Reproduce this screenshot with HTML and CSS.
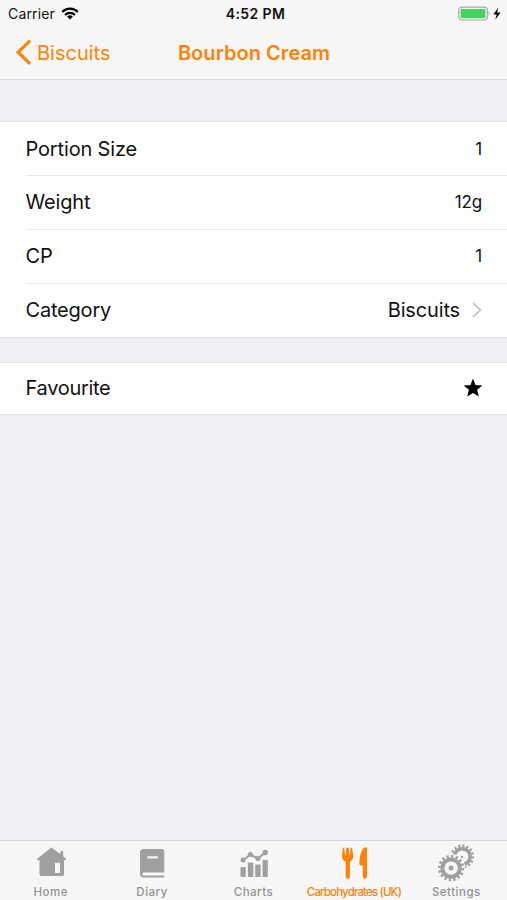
FILE: index.html
```html
<!DOCTYPE html>
<html lang="en">
<head>
<meta charset="utf-8">
<title>Bourbon Cream</title>
<link rel="stylesheet" href="styles.css">
</head>
<body>
<div class="screen">
  <header class="top">
    <div class="status">
      <div class="status-left"><span class="carrier">Carrier</span>
        <svg class="wifi" width="18" height="13" viewBox="0 0 18 13"><g fill="none" stroke="#000" stroke-width="2.1"><path d="M1.2 4.9a11 11 0 0 1 15.6 0"/><path d="M4 7.9a7.1 7.1 0 0 1 10 0"/></g><path d="M6.1 9.7a4.1 4.1 0 0 1 5.8 0L9 12.6z"/></svg>
      </div>
      <span class="time">4:52 PM</span>
      <div class="status-right">
        <svg width="44" height="16" viewBox="0 0 44 16"><rect x=".8" y="1.2" width="28.5" height="12.8" rx="3.2" fill="#f7f7f8" stroke="#a6a6a9" stroke-width="1.2"/><rect x="2.6" y="3" width="24.8" height="9.2" rx="1.2" fill="#45d45f"/><path d="M30.6 5.3q2.1 2.3 0 4.6z" fill="#a6a6a9"/><path d="M40.3 1.6L35.4 8.4h3.3l-1.5 5.4 5.5-7.4h-3.6z"/></svg>
      </div>
    </div>
    <nav class="nav">
      <div class="back"><svg width="17" height="27" viewBox="0 0 17 27"><path d="M15 1.6L3.2 13.2 15 24.8" fill="none" stroke="#ff8205" stroke-width="3.2"/></svg><span class="back-text">Biscuits</span></div>
      <h1 class="title">Bourbon Cream</h1>
      <span></span>
    </nav>
  </header>
  <main class="content">
    <section class="group">
      <div class="row"><span class="l-portion">Portion Size</span><span class="value">1</span></div>
      <div class="row"><span class="l-weight">Weight</span><span class="value">12g</span></div>
      <div class="row"><span class="l-cp">CP</span><span class="value">1</span></div>
      <div class="row"><span class="l-category">Category</span><span class="link"><span class="category">Biscuits</span><svg width="12" height="18" viewBox="0 0 12 18"><path d="M2 1.9L9.4 9 2 16.1" fill="none" stroke="#c7c7cc" stroke-width="2"/></svg></span></div>
    </section>
    <section class="group favourite">
      <div class="row"><span class="l-favourite">Favourite</span><svg class="star" width="20" height="19" viewBox="0 0 20 19"><path d="M10 -.4l2.5 6.3 6.9.5-5.3 4.4 1.7 6.8L10 13.9l-5.8 3.7 1.7-6.8L.6 6.4l6.9-.5z"/></svg></div>
    </section>
  </main>
  <footer class="tabs">
    <div class="tab">
      <svg class="icon" width="40" height="38" viewBox="0 0 40 38"><path fill="#a0a0a0" fill-rule="evenodd" d="M20.3 3.5L5.7 15.2l1 1.4 1.8-.5v13.8q0 2.2 2.2 2.2h20.5q1.8 0 1.8-2.2V16.1l1.4.5 1-1.4-3.2-3V7h-2.8v2.9zM24 18.7h5v10.4h-5z"/></svg>
      <span class="t-home">Home</span>
    </div>
    <div class="tab">
      <svg class="icon" width="40" height="38" viewBox="0 0 40 38"><path fill="#a0a0a0" fill-rule="evenodd" d="M11.5 5h18.3q2.5 0 2.5 2.5v21H11.7c-1.7 0-1.7 2.9 0 2.9h20.6v2.1H11.5C9 33.5 8 31.7 8 29.5v-21Q8 5 11.5 5zM15.5 12.2v2.4h10.3v-2.4z"/></svg>
      <span class="t-diary">Diary</span>
    </div>
    <div class="tab">
      <svg class="icon" width="40" height="38" viewBox="0 0 40 38"><g fill="#a0a0a0"><rect x="6.5" y="23" width="5.2" height="10" rx=".7"/><rect x="13.9" y="18.5" width="5.4" height="14.5" rx=".7"/><rect x="21.2" y="20.5" width="5.4" height="12.5" rx=".7"/><rect x="28.5" y="16" width="5.3" height="17" rx=".7"/><circle cx="9.1" cy="16" r="2.5"/><circle cx="16.4" cy="10.6" r="2.5"/><circle cx="23.9" cy="14.5" r="2.5"/><circle cx="31.2" cy="8.5" r="2.7"/></g><path d="M9.1 16l7.3-5.4 7.5 3.9 7.3-6" fill="none" stroke="#a0a0a0" stroke-width="2"/></svg>
      <span class="t-charts">Charts</span>
    </div>
    <div class="tab active">
      <svg class="icon" width="40" height="38" viewBox="0 0 40 38"><path fill="#ff8205" d="M7.8 3.7h1.5l.6 6.8h.8l.5-6.8h2.5l.5 6.8h.8l.6-6.8h1.5l1.1 8.2c.2 2.8-1.2 4.7-3.3 5.5v15c0 3.1-4.2 3.1-4.2 0v-15c-2.4-.8-3.9-2.7-3.7-5.5zM32 3.6v28.7c0 3.3-4.2 3.3-4.2 0V21.4h-1.9c-1 0-1.5-.6-1.5-1.6.2-8 2.3-15.8 5.5-16.2z"/></svg>
      <span class="t-carbs">Carbohydrates (UK)</span>
    </div>
    <div class="tab">
      <svg class="icon" width="40" height="38" viewBox="0 0 40 38"><defs><clipPath id="rear"><path d="M0 0h40v38H29.4V24.3A14.5 14.5 0 0 0 10 10.7V0z"/></clipPath></defs><g fill="none" stroke="#a0a0a0"><g clip-path="url(#rear)"><circle cx="26.3" cy="12.5" r="7.9" stroke-width="3.6"/><circle cx="26.3" cy="12.5" r="10.6" stroke-width="2.6" pathLength="64" stroke-dasharray="2.1 1.9"/></g><circle cx="15.1" cy="24.1" r="8.7" stroke-width="4"/><circle cx="15.1" cy="24.1" r="11.8" stroke-width="2.8" pathLength="64" stroke-dasharray="2 2"/></g><circle cx="15.1" cy="24.1" r="2.5" fill="#a0a0a0"/><circle cx="26" cy="13" r="1.2" fill="#a0a0a0"/></svg>
      <span class="t-settings">Settings</span>
    </div>
  </footer>
</div>
</body>
</html>
```
FILE: styles.css
```css
* { box-sizing: border-box; }
body { margin: 0; font-family: Inter, "Liberation Sans", sans-serif; color: #111; background: #efeff4; }
svg { display: block; flex: none; }
.screen { height: 900px; display: flex; flex-direction: column; }
.top { height: 80px; background: #f7f7f8; border-bottom: 1px solid #dbdbde; }
.status { height: 27px; display: grid; grid-template-columns: 1fr auto 1fr; align-items: center; padding: 0 5px 0 8px; font-size: 14px; }
.status-left { display: flex; align-items: center; gap: 6px; }
.carrier { letter-spacing: 0.15px; }
.time { font-weight: 600; font-size: 14px; letter-spacing: 0.4px; padding-left: 1px; }
.status-right { justify-self: end; }
.nav { height: 51px; display: grid; grid-template-columns: 1fr auto 1fr; align-items: center; padding: 0 15px; color: #ff8205; }
.back { display: flex; align-items: center; gap: 5px; font-size: 20px; }
.back-text { letter-spacing: 0; }
.title { margin: 0; font-size: 20px; font-weight: 600; letter-spacing: 0.05px; padding-left: 1px; }
.content { flex: 1; padding-top: 41px; }
.group { background: #fff; border-top: 1px solid #e0e0e3; border-bottom: 1px solid #e0e0e3; padding-left: 25.5px; }
.row { height: 54px; display: flex; align-items: center; justify-content: space-between; padding: 0 24px 1px 0; font-size: 20px; letter-spacing: -0.15px; border-bottom: 1px solid #e9e9eb; }
.row:last-child { border-bottom: 0; height: 53px; }
.row:first-child { padding-bottom: 0; }
.favourite .row:first-child { padding-bottom: 1px; }
.value { font-size: 17px; padding-right: 1px; }
.l-favourite { letter-spacing: -0.3px; }
.l-portion { letter-spacing: -0.15px; }
.l-category { letter-spacing: -0.2px; }
.link { display: flex; align-items: center; gap: 11px; }
.favourite { margin-top: 24px; }
.favourite .row { height: 51px; }
.star { overflow: visible; }
.tabs { height: 60px; display: flex; background: #f7f7f8; border-top: 1px solid #d6d6d9; color: #929292; }
.tab { flex: 1 1 0; min-width: 0; display: flex; flex-direction: column; align-items: center; padding-top: 3px; font-size: 11.5px; line-height: 14px; font-weight: 500; letter-spacing: 0.5px; white-space: nowrap; }
.icon { margin-bottom: 3px; }
.active { color: #ff8205; }
.t-carbs { letter-spacing: -0.85px; padding-right: 2px; }
```
